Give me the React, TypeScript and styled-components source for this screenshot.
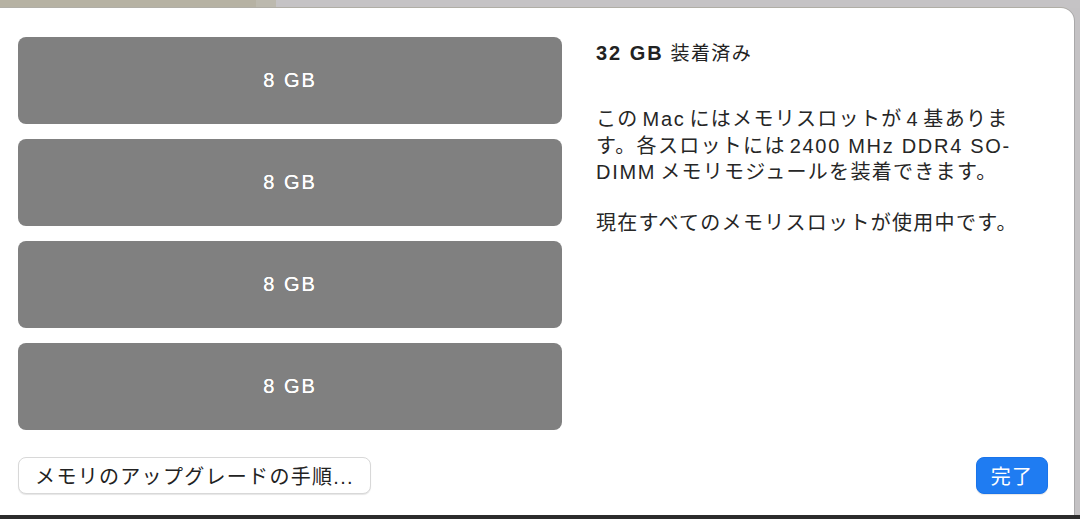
import styled, { createGlobalStyle } from "styled-components";

const GlobalStyle = createGlobalStyle`
  html, body {
    margin: 0;
    padding: 0;
    background: #c4c2c4;
  }
  body {
    font-family: "Liberation Sans", "Noto Sans CJK JP", sans-serif;
    color: #262626;
  }
`;

const slots = ["8 GB", "8 GB", "8 GB", "8 GB"];

const App = () => {
  return (
    <>
      <GlobalStyle />
      <Desktop>
        <Wallpaper>
          <WallpaperPart $color="#b6b2a3" $width="256px" />
          <WallpaperPart $color="#bcb9ae" $width="20px" />
          <WallpaperPart $color="#c5c3c5" />
        </Wallpaper>
        <Window>
          <Content>
            <SlotList>
              {slots.map((s, i) => (
                <Slot key={i}>{s}</Slot>
              ))}
            </SlotList>
            <Info>
              <Title>
                <strong>32 GB</strong> 装着済み
              </Title>
              <Paragraph $first>
                この<Latin>Mac</Latin>にはメモリスロットが<Latin>4</Latin>基ありま
                <br />
                す。各スロットには<Latin>2400 MHz DDR4 SO-</Latin>
                <br />
                <Latin $left={false}>DIMM</Latin>メモリモジュールを装着できます。
              </Paragraph>
              <Paragraph>現在すべてのメモリスロットが使用中です。</Paragraph>
            </Info>
          </Content>
          <Footer>
            <Button>メモリのアップグレードの手順...</Button>
            <Button $primary>完了</Button>
          </Footer>
        </Window>
        <BottomEdge />
      </Desktop>
    </>
  );
};

export default App;

const Desktop = styled.div`
  width: 1080px;
  height: 519px;
  overflow: hidden;
  display: flex;
  flex-direction: column;
`;

const Wallpaper = styled.div`
  height: 8px;
  display: flex;
  flex-shrink: 0;
`;

const WallpaperPart = styled.div<{ $color: string; $width?: string }>`
  background: ${(p) => p.$color};
  width: ${(p) => p.$width || "auto"};
  flex: ${(p) => (p.$width ? "none" : "1")};
`;

const Window = styled.div`
  width: 1074px;
  flex: 1;
  background: #ffffff;
  border-top-right-radius: 13px;
  box-shadow: 1px 0 0 #a9a8a9, 0 -1px 0 #b0aea6;
  display: flex;
  flex-direction: column;
  box-sizing: border-box;
  padding: 29px 26px 0 18px;
`;

const Content = styled.div`
  display: flex;
  gap: 34px;
`;

const SlotList = styled.div`
  width: 544px;
  display: flex;
  flex-direction: column;
  gap: 15px;
  flex-shrink: 0;
`;

const Slot = styled.div`
  height: 87px;
  background: #808080;
  border-radius: 8px;
  display: flex;
  align-items: center;
  justify-content: center;
  color: #ffffff;
  font-size: 20px;
  letter-spacing: 2px;
  text-shadow: 0 0 0.4px #ffffff;
`;

const Info = styled.div`
  flex: 1;
  padding-top: 4px;
`;

const Title = styled.div`
  font-size: 19px;
  line-height: 24px;
  letter-spacing: 1.4px;
  color: #222;

  strong {
    font-size: 20px;
    font-weight: 700;
    letter-spacing: 2px;
  }
`;

const Paragraph = styled.p<{ $first?: boolean }>`
  margin: ${(p) => (p.$first ? "40px" : "24px")} 0 0;
  font-size: 20px;
  line-height: 26.5px;
  letter-spacing: 1.3px;
  color: #262626;
  white-space: nowrap;
`;

const Latin = styled.span<{ $left?: boolean }>`
  letter-spacing: 1.7px;
  margin: 0 4px 0 ${(p) => (p.$left === false ? "0" : "4px")};
`;

const Footer = styled.div`
  margin-top: 27px;
  display: flex;
  justify-content: space-between;
  align-items: center;
`;

const Button = styled.button<{ $primary?: boolean }>`
  height: 37px;
  box-sizing: border-box;
  padding: 0;
  border-radius: 8px;
  font-family: "Liberation Sans", "Noto Sans CJK JP", sans-serif;
  font-size: 20px;
  letter-spacing: 1.3px;
  display: flex;
  align-items: center;
  justify-content: center;
  cursor: pointer;
  background: ${(p) => (p.$primary ? "#1f7cf2" : "#ffffff")};
  color: ${(p) => (p.$primary ? "#ffffff" : "#222222")};
  border: 1px solid ${(p) => (p.$primary ? "#1a74ea" : "#d8d8d8")};
  box-shadow: 0 1px 1px rgba(0, 0, 0, 0.1);
  width: ${(p) => (p.$primary ? "72px" : "353px")};
`;

const BottomEdge = styled.div`
  height: 4px;
  background: #2c2c2c;
  flex-shrink: 0;
`;
